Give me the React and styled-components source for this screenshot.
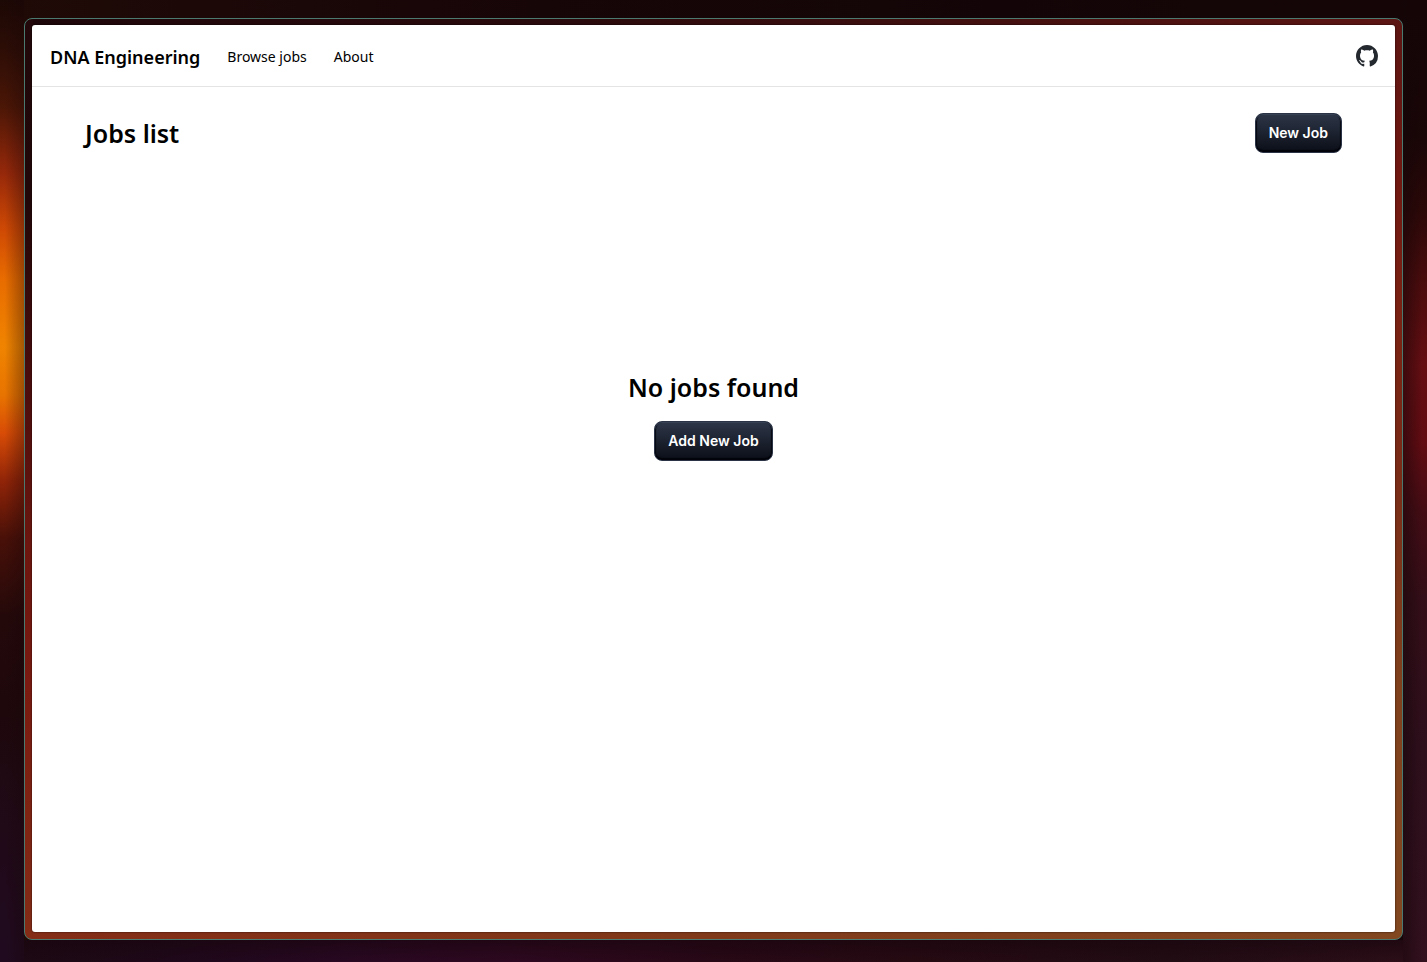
import React from "react";
import styled, { createGlobalStyle } from "styled-components";

const GlobalStyle = createGlobalStyle`
  *, *::before, *::after { box-sizing: border-box; }
  html { background: #190609; }
  body { margin: 0; }
`;

const Desktop = styled.div`
  min-height: 100vh;
  display: flex;
  padding: 18px 24px 22px;
  background:
    linear-gradient(90deg, transparent 20%, rgba(24, 5, 8, 0.35)) 0 0 / 24px 100% no-repeat,
    linear-gradient(180deg, #1c0805 0%, #2c0d06 5%, #4a1606 11%, #96280a 18%, #d04a04 24%, #e86c00 29%, #f08400 36%, #e87400 41%, #d84c06 45%, #902408 50%, #481008 56%, #24090a 64%, #1e080c 74%, #200a18 86%, #200a20 100%) 0 0 / 24px 100% no-repeat,
    linear-gradient(270deg, transparent 20%, rgba(20, 5, 8, 0.5)) 100% 0 / 24px 100% no-repeat,
    linear-gradient(180deg, #150507 0%, #190607 14%, #2c0808 22%, #4c0c0d 30%, #640e12 38%, #600c12 46%, #440c14 53%, #340e18 62%, #2e0f1c 78%, #32101e 100%) 100% 0 / 24px 100% no-repeat,
    linear-gradient(180deg, rgba(24, 5, 13, 0.6), transparent) 0 100% / 100% 22px no-repeat,
    linear-gradient(90deg, #1c0912 0%, #1e081a 12%, #280822 24%, #2e0820 36%, #280816 50%, #260a12 64%, #220c14 82%, #2c0e18 100%) 0 100% / 100% 22px no-repeat,
    linear-gradient(90deg, #1f0a06, #180608 30%, #130507 70%, #150507);
`;

const WindowFrame = styled.div`
  flex: 1;
  display: flex;
  min-width: 0;
  padding: 6px 7px 7px;
  border: 1px solid #4a7a70;
  border-radius: 8px;
  background:
    linear-gradient(180deg, #22080a 0%, #220709 20%, #480c0c 38%, #6c160f 57%, #7a1a10 72%, #842c16 100%) 0 0 / 8px 100% no-repeat,
    linear-gradient(180deg, #5c1512 0%, #701711 16%, #7a2012 30%, #7a2a16 48%, #80401c 72%, #824820 100%) 100% 0 / 8px 100% no-repeat,
    linear-gradient(90deg, #842c16, #803a1a 50%, #824820) 0 100% / 100% 8px no-repeat,
    linear-gradient(90deg, #1d060a, #2a0a0c 40%, #5c1512);
`;

const Page = styled.div`
  flex: 1;
  min-width: 0;
  display: flex;
  flex-direction: column;
  border-radius: 3px;
  background: #fff;
  color: #000;
  font-family: "Noto Sans", "Open Sans", sans-serif;
  box-shadow: 0 0 2px rgba(0, 0, 0, 0.8);
`;

const Header = styled.header`
  display: flex;
  align-items: center;
  justify-content: space-between;
  height: 62px;
  padding: 0 17px 0 18px;
  border-bottom: 1px solid #e4e4e7;
`;

const Nav = styled.nav`
  display: flex;
  align-items: center;
  gap: 27px;
  padding-top: 2px;
`;

const Brand = styled.a`
  color: inherit;
  font-size: 18px;
  line-height: 28px;
  font-weight: 600;
  text-decoration: none;
`;

const NavLink = styled.a`
  color: inherit;
  font-size: 14px;
  line-height: 20px;
  text-decoration: none;
`;

const IconLink = styled.a`
  display: flex;
  color: #24292f;
`;

const Main = styled.main`
  padding: 26px 53px;
`;

const TitleRow = styled.div`
  display: flex;
  align-items: center;
  justify-content: space-between;
`;

const Title = styled.h1`
  margin: 0;
  font-size: 25px;
  line-height: 40px;
  font-weight: 600;
`;

const EmptyState = styled.section`
  display: flex;
  flex-direction: column;
  align-items: center;
  gap: 14px;
  padding-top: 214px;
`;

const Button = styled.button`
  height: 40px;
  padding: 0 13px;
  border: 1px solid #2b3447;
  border-radius: 8px;
  background: linear-gradient(180deg, #2d3648, #0b0e17);
  box-shadow: inset 0 1px 0 #364154, inset 0 -2px 1px #02030a, inset 1px 0 1px #070a12, inset -1px 0 1px #070a12;
  color: #fff;
  font-family: Inter, sans-serif;
  font-size: 14px;
  line-height: 20px;
  font-weight: 600;
  cursor: pointer;
`;

const GitHubIcon = () => (
  <svg width="22" height="22" viewBox="0 0 16 16" fill="currentColor" aria-hidden="true">
    <path d="M8 0C3.58 0 0 3.58 0 8c0 3.54 2.29 6.53 5.47 7.59.4.07.55-.17.55-.38 0-.19-.01-.82-.01-1.49-2.01.37-2.53-.49-2.69-.94-.09-.23-.48-.94-.82-1.13-.28-.15-.68-.52-.01-.53.63-.01 1.08.58 1.23.82.72 1.21 1.87.87 2.33.66.07-.52.28-.87.51-1.07-1.78-.2-3.64-.89-3.64-3.95 0-.87.31-1.59.82-2.15-.08-.2-.36-1.02.08-2.12 0 0 .67-.21 2.2.82.64-.18 1.32-.27 2-.27s1.36.09 2 .27c1.53-1.04 2.2-.82 2.2-.82.44 1.1.16 1.92.08 2.12.51.56.82 1.27.82 2.15 0 3.07-1.87 3.75-3.65 3.95.29.25.54.73.54 1.48 0 1.07-.01 1.93-.01 2.2 0 .21.15.46.55.38A8.01 8.01 0 0 0 16 8c0-4.42-3.58-8-8-8z" />
  </svg>
);

export default function App() {
  return (
    <>
      <GlobalStyle />
      <Desktop>
        <WindowFrame>
          <Page>
            <Header>
              <Nav>
                <Brand href="#">DNA Engineering</Brand>
                <NavLink href="#jobs">Browse jobs</NavLink>
                <NavLink href="#about">About</NavLink>
              </Nav>
              <IconLink href="#github" aria-label="GitHub">
                <GitHubIcon />
              </IconLink>
            </Header>
            <Main>
              <TitleRow>
                <Title>Jobs list</Title>
                <Button type="button">New Job</Button>
              </TitleRow>
              <EmptyState>
                <Title as="h2">No jobs found</Title>
                <Button type="button">Add New Job</Button>
              </EmptyState>
            </Main>
          </Page>
        </WindowFrame>
      </Desktop>
    </>
  );
}
